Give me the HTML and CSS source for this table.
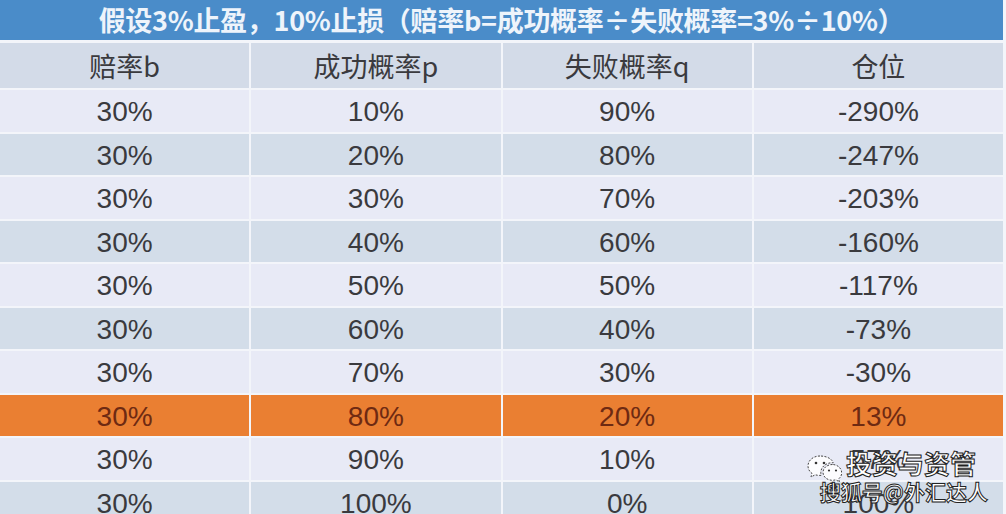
FILE: index.html
```html
<!DOCTYPE html>
<html lang="zh">
<head>
<meta charset="utf-8">
<link rel="stylesheet" href="styles.css">
</head>
<body>
<div class="sheet">
  <div class="title">假设3%止盈，10%止损（赔率b=成功概率÷失败概率=3%÷10%）</div>
  <div class="table">
    <div class="cell head">赔率b</div><div class="cell head">成功概率p</div><div class="cell head">失败概率q</div><div class="cell head">仓位</div>

    <div class="cell">30%</div><div class="cell">10%</div><div class="cell">90%</div><div class="cell">-290%</div>
    <div class="cell alt">30%</div><div class="cell alt">20%</div><div class="cell alt">80%</div><div class="cell alt">-247%</div>
    <div class="cell">30%</div><div class="cell">30%</div><div class="cell">70%</div><div class="cell">-203%</div>
    <div class="cell alt">30%</div><div class="cell alt">40%</div><div class="cell alt">60%</div><div class="cell alt">-160%</div>
    <div class="cell">30%</div><div class="cell">50%</div><div class="cell">50%</div><div class="cell">-117%</div>
    <div class="cell alt">30%</div><div class="cell alt">60%</div><div class="cell alt">40%</div><div class="cell alt">-73%</div>
    <div class="cell">30%</div><div class="cell">70%</div><div class="cell">30%</div><div class="cell">-30%</div>
    <div class="cell hot">30%</div><div class="cell hot">80%</div><div class="cell hot">20%</div><div class="cell hot">13%</div>
    <div class="cell">30%</div><div class="cell">90%</div><div class="cell">10%</div><div class="cell">57%</div>
    <div class="cell alt">30%</div><div class="cell alt">100%</div><div class="cell alt">0%</div><div class="cell alt">100%</div>
  </div>
  <div class="watermark">
    <svg class="wx" width="36" height="30" viewBox="0 0 36 30">
      <path d="M14 2C7 2 2 6.5 2 12c0 3 1.5 5.6 4 7.4L5 23l4.2-2.2c1.5.4 3 .6 4.8.6.4 0 .8 0 1.2-.1-.3-.9-.4-1.8-.4-2.8 0-5.5 5.2-9.8 11.6-9.8h.8C26 4.8 20.6 2 14 2z" fill="rgba(255,255,255,0.85)" stroke="#444" stroke-width="1" stroke-dasharray="2 1.5"/>
      <path d="M26.5 10.5c-5.3 0-9.5 3.5-9.5 7.9s4.2 7.9 9.5 7.9c1.2 0 2.3-.2 3.3-.5L33.5 28l-1-3c2-1.5 3.2-3.8 3.2-6.2 0-4.4-4.2-8.3-9.2-8.3z" fill="rgba(255,255,255,0.85)" stroke="#444" stroke-width="1" stroke-dasharray="2 1.5"/>
      <circle cx="10" cy="9" r="1.3" fill="#333"/><circle cx="18" cy="9" r="1.3" fill="#333"/>
      <circle cx="23" cy="16.5" r="1.1" fill="#333"/><circle cx="30" cy="16.5" r="1.1" fill="#333"/>
    </svg>
    <div class="wm-lines">
      <div class="wm1">投资与资管</div>
      <div class="wm2">搜狐号@外汇达人</div>
    </div>
  </div>
</div>
</body>
</html>
```

FILE: styles.css
```css
html, body {
  margin: 0;
  padding: 0;
  background: #f3f5fa;
  overflow: hidden;
}
.sheet {
  position: relative;
  width: 1006px;
  height: 514px;
  overflow: hidden;
  font-family: "Liberation Sans", "Noto Sans CJK SC", sans-serif;
}
.title {
  width: 1003px;
  height: 40px;
  background: #4a8cc9;
  color: #eef4fb;
  font-family: "Noto Sans CJK SC", sans-serif;
  font-weight: 700;
  font-size: 27px;
  line-height: 40px;
  text-align: center;
  letter-spacing: -0.3px;
  white-space: nowrap;
}
.table {
  margin-top: 3px;
  width: 1003px;
  display: grid;
  grid-template-columns: repeat(4, 1fr);
  grid-template-rows: 45px;
  grid-auto-rows: 41.5px;
  column-gap: 2px;
  row-gap: 2px;
}
.cell {
  background: #e8eaf6;
  color: #3a3a3e;
  font-size: 28px;
  padding-top: 3px;
  box-sizing: border-box;
  display: flex;
  align-items: center;
  justify-content: center;
}
.cell.head {
  background: #d3dbe8;
  font-family: "Noto Sans CJK SC", sans-serif;
  font-size: 27px;
  padding-top: 0;
}
.cell.alt {
  background: #d3dde9;
}
.cell.hot {
  background: #ea7f32;
  color: #6e2a12;
}
.watermark {
  position: absolute;
  left: 806px;
  top: 448px;
  display: flex;
  align-items: center;
  gap: 4px;
}
.wx {
  margin-top: -14px;
}
.wm-lines {
  display: flex;
  flex-direction: column;
  align-items: flex-end;
  font-family: "Noto Sans CJK SC", sans-serif;
  color: #ffffff;
  -webkit-text-stroke: 1px #222;
  font-weight: 700;
}
.wm1 {
  font-size: 26px;
  line-height: 30px;
  margin-right: 16px;
}
.wm2 {
  font-size: 21px;
  line-height: 26px;
  margin-left: -34px;
  margin-right: 4px;
}
```
